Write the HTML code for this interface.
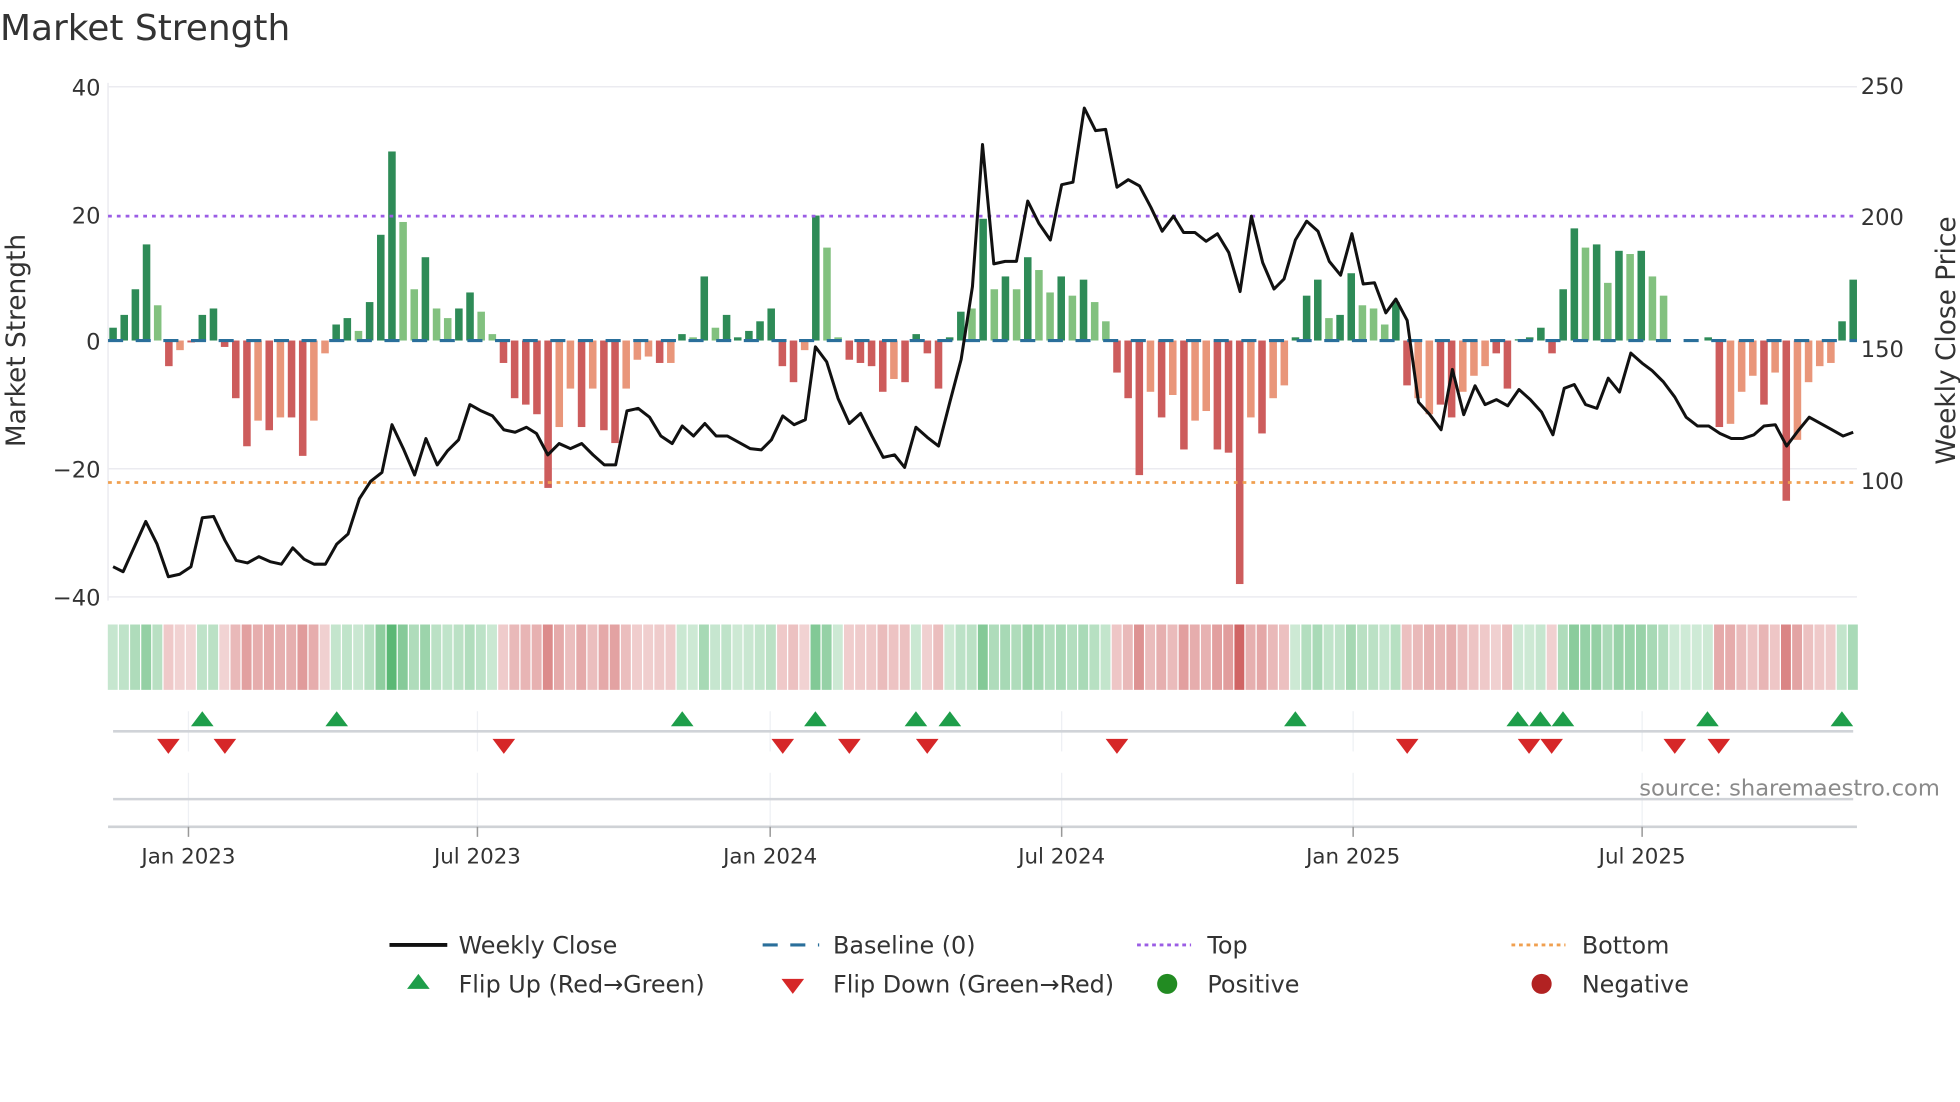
<!DOCTYPE html>
<html><head><meta charset="utf-8">
<style>
html,body{margin:0;padding:0;background:#fff;}
svg{display:block;}
text{font-family:"DejaVu Sans","Liberation Sans",sans-serif;fill:#333;}
</style></head>
<body>
<svg id="s" width="1960" height="1102" viewBox="0 0 1560 877" preserveAspectRatio="none" xmlns="http://www.w3.org/2000/svg">
<rect width="1560" height="877" fill="#fff"/>
<text x="0" y="32" font-size="28.6" fill="#333">Market Strength</text>
<g stroke="#ebebf0" stroke-width="1.2">
<line x1="86" y1="69" x2="1478" y2="69"/>
<line x1="86" y1="373" x2="1478" y2="373"/>
<line x1="86" y1="475" x2="1478" y2="475"/>
<line x1="86" y1="66" x2="86" y2="478"/>
</g>
<g font-size="18" text-anchor="end">
<text x="80" y="76">40</text>
<text x="80" y="178">20</text>
<text x="80" y="278">0</text>
<text x="80" y="380">−20</text>
<text x="80" y="482">−40</text>
</g>
<g font-size="18">
<text x="1481" y="75">250</text>
<text x="1481" y="179">200</text>
<text x="1481" y="284">150</text>
<text x="1481" y="389">100</text>
</g>
<text transform="translate(20,271) rotate(-90)" font-size="21" text-anchor="middle">Market Strength</text>
<text transform="translate(1556,271) rotate(-90)" font-size="21" text-anchor="middle">Weekly Close Price</text>
<g id="bars"></g>
<line x1="86" y1="271" x2="1478" y2="271" stroke="#2a6f9b" stroke-width="2.5" stroke-dasharray="12,10"/>
<line x1="86" y1="172" x2="1478" y2="172" stroke="#9b5de5" stroke-width="2.2" stroke-dasharray="3,4"/>
<line x1="86" y1="384" x2="1478" y2="384" stroke="#f0a050" stroke-width="2.2" stroke-dasharray="3,4"/>
<polyline id="price" fill="none" stroke="#111" stroke-width="2.4" stroke-linejoin="round"/>
<g id="heat"></g>
<g stroke="#eef0f4" stroke-width="1">
<line x1="150" y1="566" x2="150" y2="598"/><line x1="380" y1="566" x2="380" y2="598"/><line x1="613" y1="566" x2="613" y2="598"/><line x1="845" y1="566" x2="845" y2="598"/><line x1="1077" y1="566" x2="1077" y2="598"/><line x1="1307" y1="566" x2="1307" y2="598"/>
<line x1="150" y1="615" x2="150" y2="658"/><line x1="380" y1="615" x2="380" y2="658"/><line x1="613" y1="615" x2="613" y2="658"/><line x1="845" y1="615" x2="845" y2="658"/><line x1="1077" y1="615" x2="1077" y2="658"/><line x1="1307" y1="615" x2="1307" y2="658"/>
</g>
<line x1="90" y1="582" x2="1475" y2="582" stroke="#d0d3d8" stroke-width="2"/>
<line x1="90" y1="636" x2="1475" y2="636" stroke="#d0d3d8" stroke-width="2"/>
<line x1="86" y1="658" x2="1478" y2="658" stroke="#cfd2d6" stroke-width="2"/>
<g stroke="#999" stroke-width="1.2">
<line x1="150" y1="658" x2="150" y2="666"/><line x1="380" y1="658" x2="380" y2="666"/><line x1="613" y1="658" x2="613" y2="666"/><line x1="845" y1="658" x2="845" y2="666"/><line x1="1077" y1="658" x2="1077" y2="666"/><line x1="1307" y1="658" x2="1307" y2="666"/>
</g>
<g id="flips"></g>
<text x="1544" y="633" font-size="18" style="fill:#8a8a8a" text-anchor="end">source: sharemaestro.com</text>
<g font-size="17" text-anchor="middle">
<text x="150" y="687">Jan 2023</text><text x="380" y="687">Jul 2023</text><text x="613" y="687">Jan 2024</text><text x="845" y="687">Jul 2024</text><text x="1077" y="687">Jan 2025</text><text x="1307" y="687">Jul 2025</text>
</g>
<g font-size="19">
<line x1="310" y1="752" x2="356" y2="752" stroke="#111" stroke-width="3"/>
<text x="365" y="759">Weekly Close</text>
<line x1="607" y1="752" x2="652" y2="752" stroke="#2a6f9b" stroke-width="2.5" stroke-dasharray="12,10"/>
<text x="663" y="759">Baseline (0)</text>
<line x1="905" y1="752" x2="948" y2="752" stroke="#9b5de5" stroke-width="2.2" stroke-dasharray="3,3"/>
<text x="961" y="759">Top</text>
<line x1="1203" y1="752" x2="1246" y2="752" stroke="#f0a050" stroke-width="2.2" stroke-dasharray="3,3"/>
<text x="1259" y="759">Bottom</text>
<polygon points="333,775 342,787 324,787" fill="#1e9e4a"/>
<text x="365" y="790">Flip Up (Red→Green)</text>
<polygon points="622,779 640,779 631,791" fill="#d62728"/>
<text x="663" y="790">Flip Down (Green→Red)</text>
<circle cx="929" cy="783" r="8" fill="#228b22"/>
<text x="961" y="790">Positive</text>
<circle cx="1227" cy="783" r="8" fill="#b22222"/>
<text x="1259" y="790">Negative</text>
</g>
</svg>
<script>
var raw="2 d,4 d,8 d,15 d,5.5 l,-4 d,-1.5 l,-0.3 d,4 d,5 d,-1 d,-9 d,-16.5 d,-12.5 l,-14 d,-12 l,-12 d,-18 d,-12.5 l,-2 l,2.5 d,3.5 d,1.5 l,6 d,16.5 d,29.5 d,18.5 l,8 l,13 d,5 l,3.5 l,5 d,7.5 d,4.5 l,1 l,-3.5 d,-9 d,-10 d,-11.5 d,-23 d,-13.5 l,-7.5 l,-13.5 d,-7.5 l,-14 d,-16 d,-7.5 l,-3 l,-2.5 l,-3.5 d,-3.5 l,1 d,0.5 l,10 d,2 l,4 d,0.5 d,1.5 d,3 d,5 d,-4 d,-6.5 d,-1.5 l,19.5 d,14.5 l,0.5 l,-3 d,-3.5 d,-4 d,-8 d,-6 l,-6.5 d,1 d,-2 d,-7.5 d,0.5 d,4.5 d,5 l,19 d,8 l,10 d,8 l,13 d,11 l,7.5 l,10 d,7 l,9.5 d,6 l,3 l,-5 d,-9 d,-21 d,-8 l,-12 d,-8.5 l,-17 d,-12.5 l,-11 l,-17 d,-17.5 d,-38 d,-12 l,-14.5 d,-9 l,-7 l,0.5 d,7 d,9.5 d,3.5 l,4 d,10.5 d,5.5 l,5 l,2.5 l,6 d,-7 d,-9 l,-11.5 l,-10 d,-12 d,-8 l,-5.5 l,-4 l,-2 d,-7.5 d,0.2 d,0.5 d,2 d,-2 d,8 d,17.5 d,14.5 l,15 d,9 l,14 d,13.5 l,14 d,10 l,7 l,0 d,0 d,0 d,0.5 d,-13.5 d,-13 l,-8 l,-5.5 l,-10 d,-5 l,-25 d,-15.5 l,-6.5 l,-4 l,-3.5 l,3 d,9.5 d";
var data=raw.split(',').map(function(s){var p=s.split(' ');return [parseFloat(p[0]),p[1]=='l'];});
var ns="http://www.w3.org/2000/svg";
function el(t,a,p){var e=document.createElementNS(ns,t);for(var k in a)e.setAttribute(k,a[k]);p.appendChild(e);return e;}
var bars=document.getElementById('bars'),heat=document.getElementById('heat');
var n=data.length,x0=90,x1=1475,step=(x1-x0)/(n-1);
for(var i=0;i<n;i++){
 var v=data[i][0],lt=data[i][1],x=x0+i*step,h=Math.abs(v)*5.1,y=v>=0?271-h:271;
 var c=v>=0?(lt?'#82c17f':'#2e8b57'):(lt?'#e9967a':'#cd5c5c');
 if(h>0.3)el('rect',{x:x-3,y:y,width:6,height:h,fill:c},bars);
 var a=Math.min(0.95,0.25+Math.abs(v)/30*0.6);
 var hc=v>=0?'rgba(60,170,90,'+a+')':'rgba(205,92,92,'+a+')';
 el('rect',{x:x-4.2,y:497,width:step-1,height:52,fill:hc},heat);
}
var pts=[[90,451],[98,455],[107,435],[116,415],[125,433],[134,459],[143,457],[152,451],[161,412],[170,411],[179,430],[188,446],[197,448],[206,443],[215,447],[224,449],[233,436],[242,445],[250,449],[259,449],[268,433],[277,425],[286,397],[295,383],[304,376],[312,338],[321,357],[330,378],[339,349],[348,370],[356,359],[365,350],[374,322],[383,327],[392,331],[401,342],[410,344],[419,340],[427,345],[436,362],[445,353],[454,357],[463,353],[472,362],[481,370],[490,370],[499,327],[508,325],[517,332],[526,347],[535,353],[543,339],[552,347],[561,337],[570,347],[579,347],[588,352],[597,357],[606,358],[614,350],[623,331],[632,338],[641,334],[649,276],[658,288],[667,317],[676,337],[685,329],[694,347],[703,364],[712,362],[720,372],[729,340],[738,348],[747,355],[756,320],[765,286],[774,228],[782,115],[791,210],[800,208],[809,208],[818,160],[827,178],[836,191],[845,147],[854,145],[863,86],[872,104],[880,103],[889,149],[898,143],[907,148],[916,165],[925,184],[934,172],[942,185],[951,185],[960,192],[969,186],[978,201],[987,232],[996,172],[1005,209],[1014,230],[1022,222],[1031,191],[1040,176],[1049,184],[1058,208],[1067,219],[1076,186],[1085,226],[1094,225],[1103,249],[1111,238],[1120,255],[1129,320],[1138,330],[1147,342],[1156,294],[1165,330],[1174,307],[1182,322],[1191,318],[1200,323],[1209,310],[1218,318],[1227,328],[1236,346],[1245,309],[1253,306],[1262,322],[1271,325],[1280,301],[1289,312],[1298,281],[1307,289],[1315,295],[1324,304],[1333,316],[1342,332],[1351,339],[1360,339],[1369,345],[1378,349],[1387,349],[1396,346],[1404,339],[1413,338],[1422,355],[1431,343],[1440,332],[1449,337],[1458,342],[1467,347],[1475,344]];
document.getElementById('price').setAttribute('points',pts.map(function(p){return p.join(',')}).join(' '));
var fl=document.getElementById('flips');
[161,268,543,649,729,756,1031,1208,1226,1244,1359,1466].forEach(function(x){el('polygon',{points:(x)+',566 '+(x+9)+',578 '+(x-9)+',578',fill:'#1e9e4a'},fl);});
[134,179,401,623,676,738,889,1120,1217,1235,1333,1368].forEach(function(x){el('polygon',{points:(x-9)+',588 '+(x+9)+',588 '+x+',600',fill:'#d62728'},fl);});
</script>
</body></html>
